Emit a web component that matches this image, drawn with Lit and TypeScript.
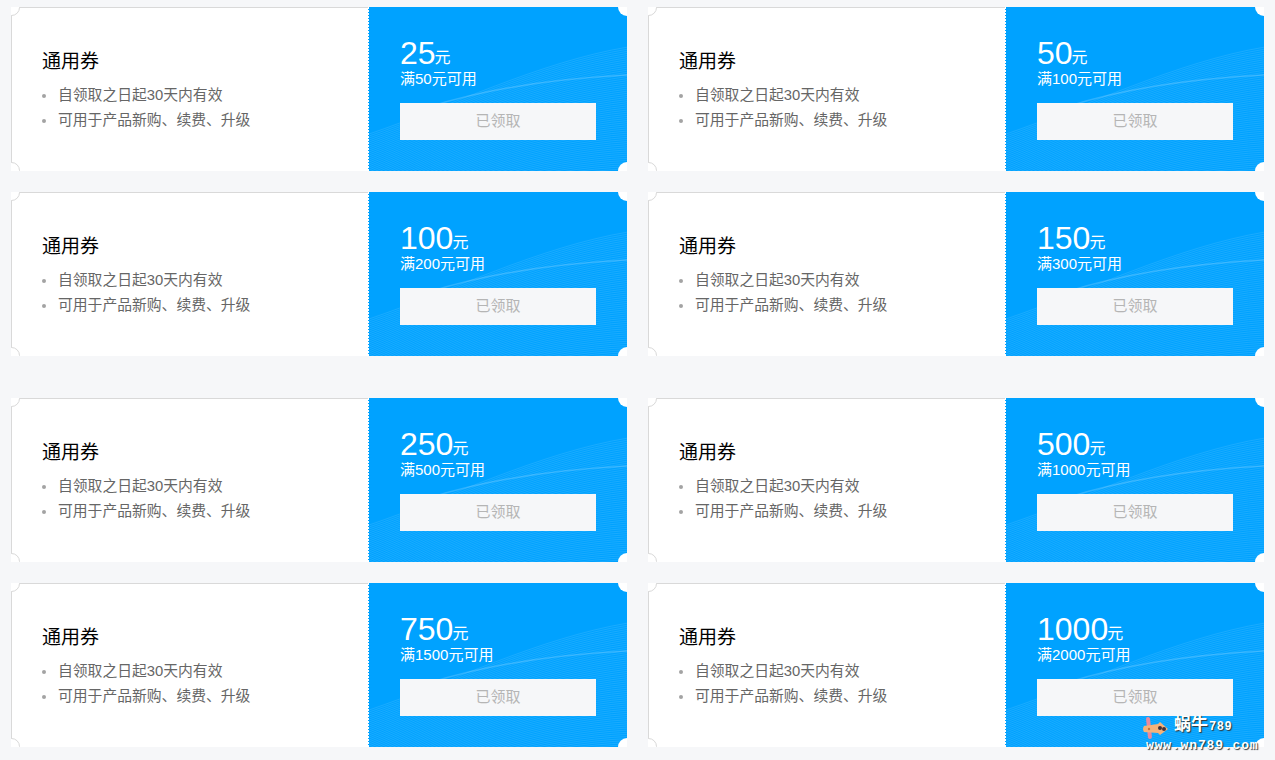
import { LitElement, html, css, svg } from 'lit';
import { customElement } from 'lit/decorators.js';

const groups = [
  [
    { amount: '25', min: '50' },
    { amount: '50', min: '100' },
    { amount: '100', min: '200' },
    { amount: '150', min: '300' },
  ],
  [
    { amount: '250', min: '500' },
    { amount: '500', min: '1000' },
    { amount: '750', min: '1500' },
    { amount: '1000', min: '2000' },
  ],
];

// fan of thin curves behind the price block
const waves = () => {
  const lines = [];
  for (let i = 0; i < 60; i++) {
    const y0 = 127 + i * 2;
    const y1 = 40 + i * 2.1;
    lines.push(`M0 ${y0} C80 ${100 + i * 1.6} 170 ${55 + i * 1.9} 259 ${y1}`);
  }
  return lines;
};

@customElement('app-root')
class AppRoot extends LitElement {
  static styles = css`
    :host {
      display: block;
      position: relative;
      height: 760px;
      overflow: hidden;
      background: #f6f7f9;
      font-family: 'Liberation Sans', 'Noto Sans CJK SC', sans-serif;
    }
    .page {
      display: flex;
      flex-direction: column;
      gap: 42px;
      padding: 7px 11px 0;
    }
    .group {
      display: grid;
      grid-template-columns: 616px 616px;
      grid-auto-rows: 164px;
      gap: 21px;
    }
    .ticket {
      display: flex;
      overflow: hidden;
    }
    .info {
      position: relative;
      box-sizing: border-box;
      width: 357px;
      padding: 41px 0 0 30px;
      background: #fff;
      border-top: 1px solid #d9d9d9;
      border-left: 1px solid #d9d9d9;
    }
    .info::before,
    .info::after {
      content: '';
      position: absolute;
      left: -9px;
      box-sizing: border-box;
      width: 17px;
      height: 17px;
      background: #fff;
      border: 1px solid #d9d9d9;
      border-radius: 50%;
    }
    .info::before {
      top: -9px;
    }
    .info::after {
      bottom: -8px;
    }
    .title {
      font-size: 19px;
      line-height: 24px;
      color: #000;
      padding-top: 1px;
      margin-bottom: 9px;
    }
    ul {
      list-style: none;
      margin: 0;
      padding: 0;
    }
    li {
      display: flex;
      align-items: center;
      gap: 12px;
      font-size: 14.8px;
      line-height: 25px;
      color: #666;
    }
    li::before {
      content: '';
      width: 4px;
      height: 4px;
      border-radius: 50%;
      background: #a3a3a3;
    }
    .value {
      position: relative;
      flex: 1;
      box-sizing: border-box;
      padding: 28px 31px 0 32px;
      background: repeating-linear-gradient(#fff 0 2px, transparent 2px 3px) left top / 1px 100%
          no-repeat,
        #00a2ff;
      color: #fff;
    }
    .value::before,
    .value::after {
      content: '';
      position: absolute;
      right: -9px;
      width: 18px;
      height: 18px;
      background: #fff;
      border-radius: 50%;
    }
    .value::before {
      top: -9px;
    }
    .value::after {
      bottom: -9px;
    }
    .waves {
      position: absolute;
      left: 1px;
      top: 0;
      width: 258px;
      height: 164px;
    }
    .price,
    .limit,
    .btn {
      position: relative;
    }
    .price {
      display: flex;
      align-items: baseline;
      height: 36px;
      line-height: 36px;
      font-size: 32px;
    }
    .price span {
      font-size: 16px;
      position: relative;
      top: -1px;
      left: -1px;
    }
    .limit {
      font-size: 15px;
      line-height: 16px;
      margin-bottom: 16px;
    }
    .btn {
      height: 37px;
      line-height: 35px;
      text-align: center;
      font-size: 15px;
      color: #b5b5b5;
      background: #f6f7f9;
    }
    .mark {
      position: absolute;
      left: 1143px;
      top: 714px;
      width: 120px;
      height: 42px;
      color: #fff;
      text-shadow: 1px 1px 1px #333;
    }
    .mark svg {
      position: absolute;
      left: 0;
      top: 3px;
    }
    .mark .name {
      position: absolute;
      left: 31px;
      top: 0;
      font-size: 17px;
      line-height: 22px;
      font-weight: 700;
      white-space: nowrap;
    }
    .mark .name span {
      font-family: 'Liberation Mono', monospace;
      font-size: 12px;
      letter-spacing: 0.5px;
      margin-left: 1px;
    }
    .mark .url {
      position: absolute;
      left: 3px;
      top: 24px;
      font-family: 'Liberation Mono', monospace;
      font-size: 13px;
      line-height: 16px;
      font-weight: 700;
      letter-spacing: 0.85px;
      white-space: nowrap;
    }
  `;

  renderTicket(t: { amount: string; min: string }) {
    return html`
      <div class="ticket">
        <div class="info">
          <div class="title">通用券</div>
          <ul>
            <li>自领取之日起30天内有效</li>
            <li>可用于产品新购、续费、升级</li>
          </ul>
        </div>
        <div class="value">
          <svg class="waves" viewBox="0 0 258 164" fill="none" stroke="#fff" stroke-width="0.7">
            ${waves().map((d) => svg`<path d=${d} stroke-opacity="0.15"></path>`)}
            <path d="M60 100 C110 84 180 72 259 68" stroke-opacity="0.18" stroke-width="1.5"></path>
          </svg>
          <div class="price">${t.amount}<span>元</span></div>
          <div class="limit">满${t.min}元可用</div>
          <div class="btn">已领取</div>
        </div>
      </div>
    `;
  }

  render() {
    return html`
      <div class="page">
        ${groups.map(
          (g) => html`<div class="group">${g.map((t) => this.renderTicket(t))}</div>`,
        )}
      </div>
      <div class="mark">
        <svg width="26" height="24" viewBox="0 0 26 24">
          <rect x="4" y="0" width="4" height="22" rx="2" fill="#e88aa0" transform="rotate(-6 6 11)"></rect>
          <path d="M1 9 L15 7 L17 5 L25 12 L17 18 L15 16 L1 15 Q-1 12 1 9Z" fill="#f5b27a"></path>
          <circle cx="6" cy="12" r="1.2" fill="#c9743c"></circle>
          <circle cx="17" cy="11" r="2" fill="#40323a"></circle>
          <circle cx="21" cy="12" r="2" fill="#40323a"></circle>
        </svg>
        <div class="name">蜗牛<span>789</span></div>
        <div class="url">www.wn789.com</div>
      </div>
    `;
  }
}
